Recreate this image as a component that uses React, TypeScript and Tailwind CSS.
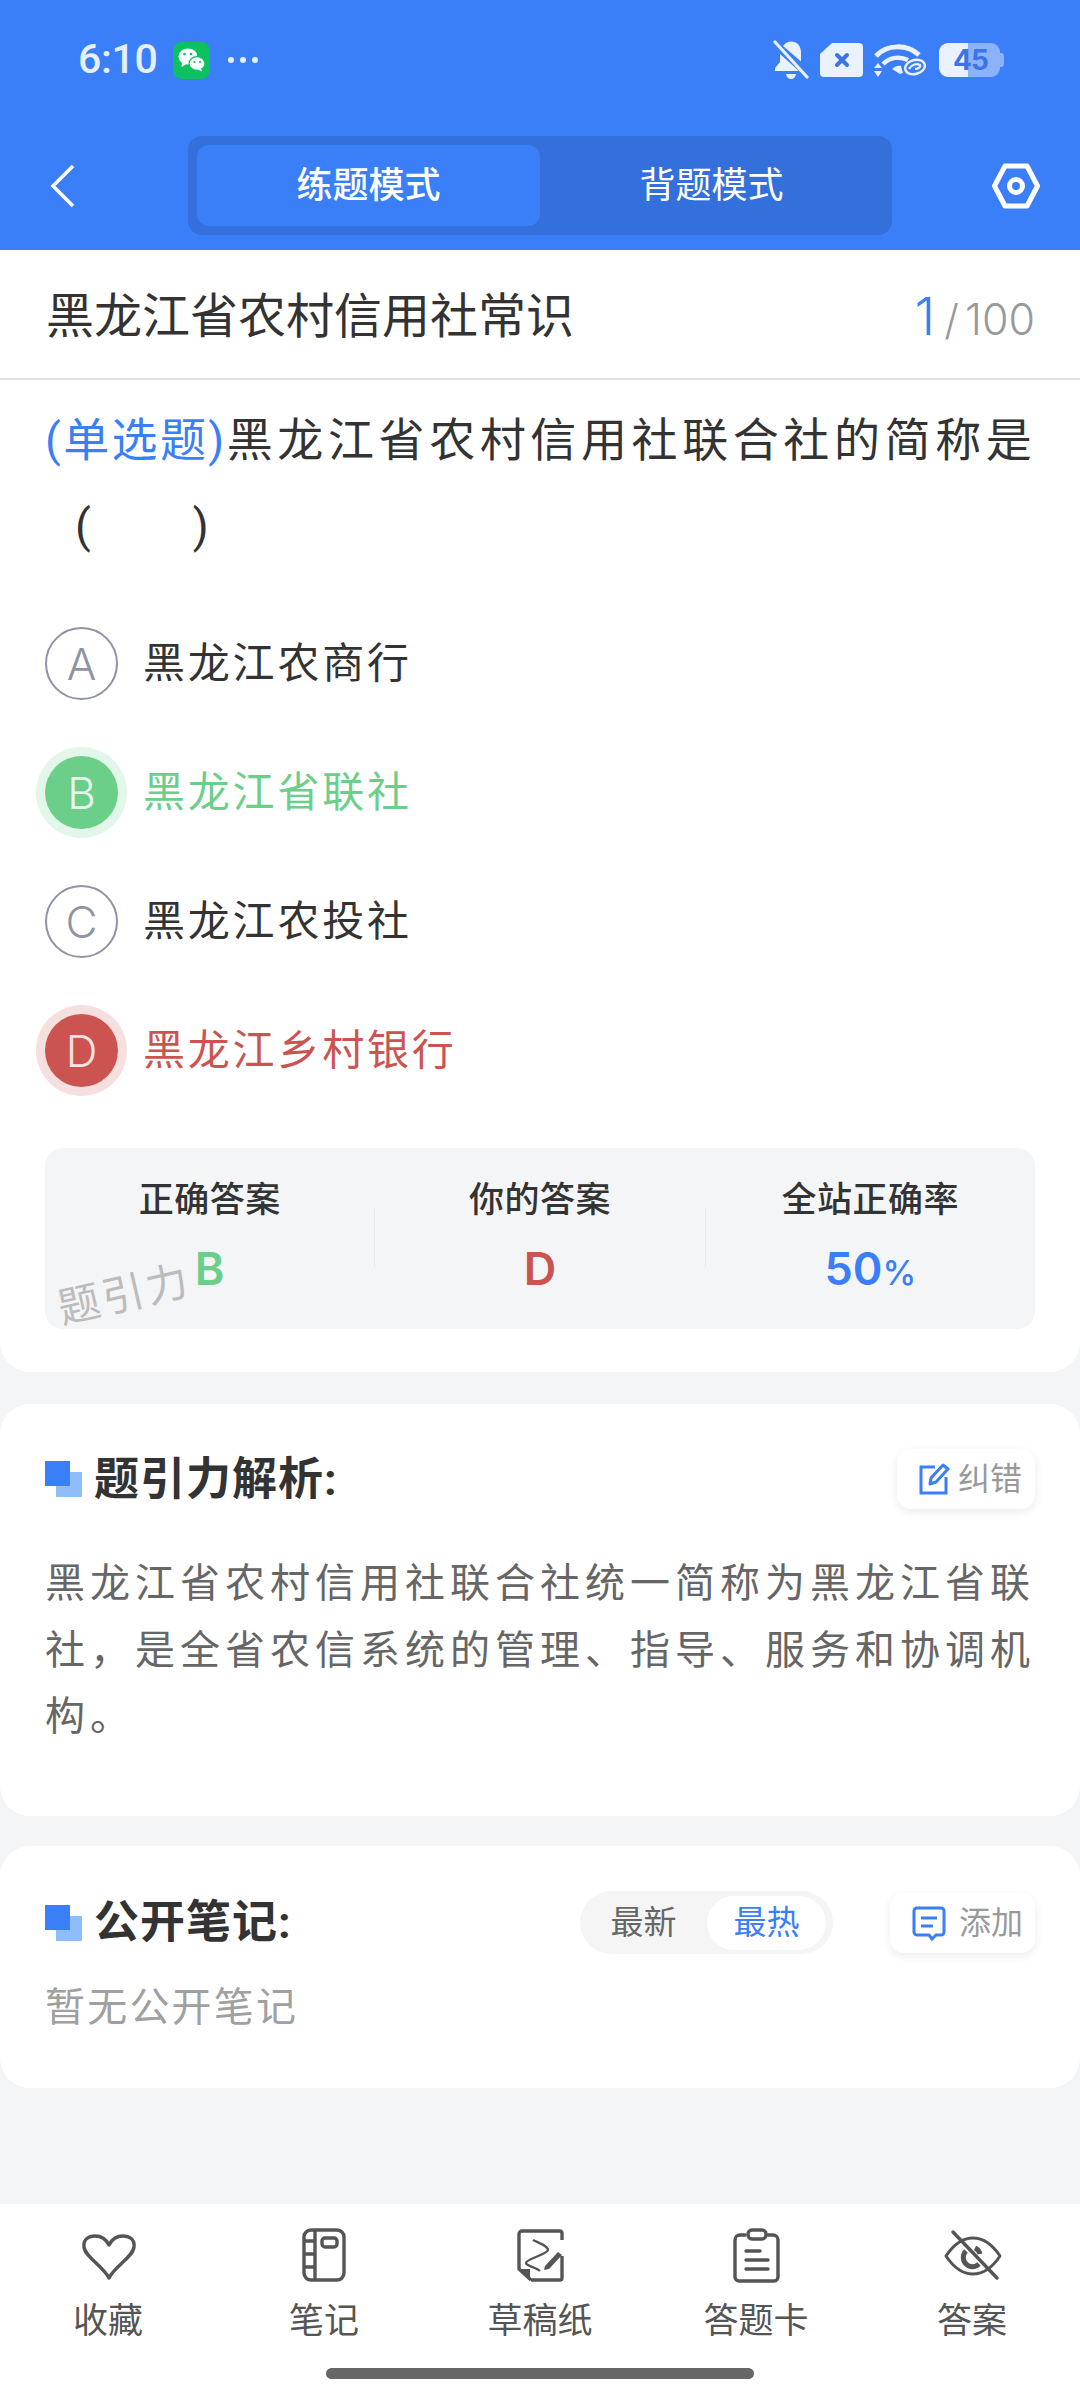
import { ReactNode } from "react"

/* ------------------------------ status bar ------------------------------ */

function WeChatIcon() {
    return (
        <svg width="37" height="37" viewBox="0 0 37 37">
            <rect width="37" height="37" rx="9" fill="#0ac25f" />
            <ellipse cx="15" cy="14.5" rx="9.5" ry="8" fill="#fff" />
            <path d="M9 20l-.5 5 5-3z" fill="#fff" />
            <ellipse cx="24" cy="21.5" rx="8" ry="6.8" fill="#fff" stroke="#0ac25f" strokeWidth="1.2" />
            <path d="M28 26.5l1 3-4-2z" fill="#fff" />
            <circle cx="11.5" cy="12" r="1.3" fill="#0ac25f" />
            <circle cx="18" cy="12" r="1.3" fill="#0ac25f" />
            <circle cx="21.5" cy="20" r="1.1" fill="#0ac25f" />
            <circle cx="27" cy="20" r="1.1" fill="#0ac25f" />
        </svg>
    )
}

function BellOff() {
    return (
        <svg width="36" height="40" viewBox="0 0 36 40" fill="#eaf1ff">
            <path d="M10 6c2-3 5-4.500 8-4.500 6 0 10 4.500 10 11v9l-18-15.500z" />
            <path d="M7 14v8l-5 6v3h24z" />
            <path d="M13 34h10c-.5 3-2.500 5-5 5s-4.500-2-5-5z" />
            <path d="M2 2l32 35" stroke="#eaf1ff" strokeWidth="3.2" strokeLinecap="round" />
        </svg>
    )
}

function SimBox() {
    return (
        <svg width="43" height="34" viewBox="0 0 43 34">
            <path d="M12 0h27a4 4 0 0 1 4 4v26a4 4 0 0 1-4 4H4a4 4 0 0 1-4-4V11z" fill="#eaf1ff" />
            <path d="M17 12l10 10M27 12L17 22" stroke="#3a74e6" strokeWidth="4" strokeLinecap="round" />
        </svg>
    )
}

function WifiIcon() {
    return (
        <svg width="52" height="34" viewBox="0 0 52 34" fill="none">
            <path d="M2 13C13 1 33 1 45 12" stroke="#eaf1ff" strokeWidth="5" />
            <path d="M9 21c7-7 17-8 25-4" stroke="#eaf1ff" strokeWidth="4.500" />
            <path d="M18 26c3-3 6-4 9-3l2 7-3 1z" fill="#eaf1ff" />
            <path d="M4 20l4 5H0zM4 34l4-6H0z" fill="#eaf1ff" />
            <ellipse cx="41" cy="24" rx="10" ry="7" stroke="#eaf1ff" strokeWidth="2.400" transform="rotate(-15 41 24)" />
            <path d="M35 26c2-4 7-6 11-4 1 2-2 4-5 4" stroke="#eaf1ff" strokeWidth="2.200" />
        </svg>
    )
}

function Battery() {
    return (
        <div className="relative flex h-[34px] w-[65px]">
            <div className="h-full w-[29px] rounded-l-[9px] bg-[#eaf1ff]" />
            <div className="h-full w-[32px] rounded-r-[9px] bg-[#8cb2fb]" />
            <div className="my-auto h-[14px] w-[4px] rounded-r-[3px] bg-[#8cb2fb]" />
            <span className="absolute left-[14px] top-0 font-['Inter'] text-[28px] font-bold leading-[34px] tracking-[-1px] text-[#3a74e6]">45</span>
        </div>
    )
}

function StatusBar() {
    return (
        <div className="flex h-[120px] items-center pl-[78px] pr-[76px]">
            <span className="w-[78px] whitespace-nowrap text-[41px] font-medium tracking-[-0.3px] text-[#e6eeff]">6:10</span>
            <div className="ml-[17px]">
                <WeChatIcon />
            </div>
            <div className="ml-[18px] flex gap-[6px]">
                <div className="h-[6px] w-[6px] rounded-full bg-[#e6eeff]" />
                <div className="h-[6px] w-[6px] rounded-full bg-[#e6eeff]" />
                <div className="h-[6px] w-[6px] rounded-full bg-[#e6eeff]" />
            </div>
            <div className="ml-auto flex items-center">
                <BellOff />
                <div className="ml-[11px]"><SimBox /></div>
                <div className="ml-[11px]"><WifiIcon /></div>
                <div className="ml-[13px]"><Battery /></div>
            </div>
        </div>
    )
}

/* --------------------------------- header -------------------------------- */

function Header() {
    return (
        <div className="h-[250px] bg-[#3b7ff8]">
            <StatusBar />
            <div className="mt-[16px] flex h-[99px] items-center">
                <svg className="ml-[48px]" width="30" height="46" viewBox="0 0 30 46" fill="none">
                    <path d="M25 3L5 23l20 20" stroke="#fff" strokeWidth="3.500" />
                </svg>
                <div className="ml-[110px] flex h-full w-[704px] rounded-[14px] bg-[#3370dc] p-[9px]">
                    <div className="flex flex-1 items-center justify-center rounded-[12px] bg-[#3b7ff8] text-[36px] font-medium text-white">练题模式</div>
                    <div className="flex flex-1 items-center justify-center text-[36px] text-white">背题模式</div>
                </div>
                <svg className="ml-[96px]" width="56" height="48" viewBox="0 0 56 48" fill="none">
                    <path d="M17 4h22l10.500 20L39 44H17L6.500 24z" stroke="#fff" strokeWidth="5" strokeLinejoin="round" />
                    <circle cx="28" cy="24" r="6.500" stroke="#fff" strokeWidth="5" />
                </svg>
            </div>
        </div>
    )
}

/* --------------------------------- options ------------------------------- */

interface Option {
    letter: string
    label: string
    state: "idle" | "right" | "wrong"
}

const options: Option[] = [
    { letter: "A", label: "黑龙江农商行", state: "idle" },
    { letter: "B", label: "黑龙江省联社", state: "right" },
    { letter: "C", label: "黑龙江农投社", state: "idle" },
    { letter: "D", label: "黑龙江乡村银行", state: "wrong" },
]

function OptionRow({ option }: { option: Option }) {
    const circle =
        option.state === "right"
            ? "bg-[#6bcf8a] text-[#e8f8ee] shadow-[0_0_0_9px_#e2f6e9]"
            : option.state === "wrong"
                ? "bg-[#cc5450] text-[#f8e4e3] shadow-[0_0_0_9px_#f6e0df]"
                : "border-2 border-[#8f93a3] text-[#8f93a3]"
    const text = option.state === "right" ? "text-[#6bcf8a]" : option.state === "wrong" ? "text-[#cc5450]" : "text-[#333333]"
    return (
        <div className="flex h-[129px] items-center">
            <div className={`flex h-[73px] w-[73px] items-center justify-center rounded-full font-['Inter'] text-[44px] font-light ${circle}`}>
                {option.letter}
            </div>
            <span className={`ml-[25px] text-[42px] leading-none tracking-[2.800px] ${text}`}>{option.label}</span>
        </div>
    )
}

function StatColumn({ label, children }: { label: string; children: ReactNode }) {
    return (
        <div className="flex flex-1 flex-col items-center pt-[31px]">
            <span className="text-[35px] font-medium leading-[44px] tracking-[0.500px] text-[#333333]">{label}</span>
            <div className="mt-[20px] font-['Inter'] text-[45px] font-semibold leading-[52px]">{children}</div>
        </div>
    )
}

function QuestionCard() {
    return (
        <div className="rounded-b-[30px] bg-white">
            <div className="flex h-[130px] items-center justify-between border-b-2 border-[#e2e2e2] pl-[46px] pr-[45px] pt-[5px]">
                <span className="text-[48px] leading-none text-[#333333]">黑龙江省农村信用社常识</span>
                <div className="flex items-baseline font-['Inter'] text-[#999999]">
                    <span className="text-[52px] font-light text-[#3b7ff8]">1</span>
                    <span className="ml-[9px] font-light text-[42px]">/</span>
                    <span className="ml-[6px] text-[43px] font-light">100</span>
                </div>
            </div>
            <div className="px-[45px] pt-[17px]">
                <div className="whitespace-nowrap text-[46px] leading-[87px] tracking-[4.600px] text-[#333333]">
                    <span className="tracking-[2.400px] text-[#3b7ff8]">(单选题)</span>黑龙江省农村信用社联合社的简称是
                </div>
                <div className="flex h-[84px] items-center pl-[30px] text-[46px] text-[#333333]">
                    <span>(</span>
                    <span className="w-[102px]" />
                    <span>)</span>
                </div>
                <div className="mt-[31px]">
                    {options.map((option) => (
                        <OptionRow key={option.letter} option={option} />
                    ))}
                </div>
                <div className="relative mt-[33px] flex h-[181px] rounded-[18px] bg-[#f4f5f7]">
                    <StatColumn label="正确答案">
                        <span className="text-[#6bcf8a]">B</span>
                    </StatColumn>
                    <div className="mt-[60px] h-[59px] w-px bg-[#e6e7ea]" />
                    <StatColumn label="你的答案">
                        <span className="text-[#cc5450]">D</span>
                    </StatColumn>
                    <div className="mt-[60px] h-[59px] w-px bg-[#e6e7ea]" />
                    <StatColumn label="全站正确率">
                        <span className="text-[#3b7ff8]">50<span className="text-[34px] font-medium">%</span></span>
                    </StatColumn>
                    <span className="absolute left-[12px] top-[126px] -rotate-[13deg] text-[42px] leading-none tracking-[3px] text-[#bcbcbc]">题引力</span>
                </div>
            </div>
            <div className="h-[43px]" />
        </div>
    )
}

/* --------------------------------- cards --------------------------------- */

function SectionTitle({ children }: { children: ReactNode }) {
    return (
        <div className="flex items-center">
            <div className="relative h-[36px] w-[37px]">
                <div className="absolute left-[11px] top-[11px] h-[25px] w-[26px] bg-[#8fbdfb]" />
                <div className="absolute left-0 top-0 h-[25px] w-[25px] bg-[#3b7ff8]" />
            </div>
            <span className="ml-[12px] text-[45px] font-bold leading-none tracking-[1px] text-[#333333]">{children}</span>
        </div>
    )
}

function ActionButton({ icon, label, wide }: { icon: ReactNode; label: string; wide?: boolean }) {
    return (
        <div className={`flex h-[60px] items-center rounded-[14px] bg-white pl-[21px] shadow-[0_3px_10px_rgba(0,0,0,0.08)] ${wide ? "w-[145px] gap-[12px]" : "w-[138px] gap-[8px]"}`}>
            {icon}
            <span className="text-[32px] text-[#999999]">{label}</span>
        </div>
    )
}

function AnalysisCard() {
    return (
        <div className="mt-[32px] h-[412px] rounded-[30px] bg-white pl-[45px] pr-[35px] pt-[45px]">
            <div className="mr-[10px] flex items-center justify-between">
                <SectionTitle>题引力解析:</SectionTitle>
                <ActionButton
                    label="纠错"
                    icon={
                        <svg width="32" height="32" viewBox="0 0 32 32" fill="none">
                            <path d="M17 4H3v26h25V14" stroke="#3b7ff8" strokeWidth="3" />
                            <path d="M12 21l1-6L25 2l5 4-12 13z" stroke="#3b7ff8" strokeWidth="3" strokeLinejoin="round" />
                        </svg>
                    }
                />
            </div>
            <p className="mt-[42px] text-[40px] leading-[66.500px] tracking-[5px] text-[#666666]">
                黑龙江省农村信用社联合社统一简称为黑龙江省联社，是全省农信系统的管理、指导、服务和协调机构。
            </p>
        </div>
    )
}

function NotesCard() {
    return (
        <div className="mt-[30px] h-[242px] rounded-[30px] bg-white px-[45px] pt-[45px]">
            <div className="flex items-center">
                <SectionTitle>公开笔记:</SectionTitle>
                <div className="ml-auto flex h-[63px] w-[253px] items-center rounded-full bg-[#f5f5f5] pr-[7px]">
                    <span className="flex-1 text-center text-[33px] text-[#666666]">最新</span>
                    <span className="flex h-[54px] w-[119px] items-center justify-center rounded-full bg-white text-[33px] text-[#3b7ff8]">最热</span>
                </div>
                <div className="ml-[57px]">
                    <ActionButton
                        wide
                        label="添加"
                        icon={
                            <svg width="36" height="36" viewBox="0 0 36 36" fill="none">
                                <path d="M6 3h24a3 3 0 0 1 3 3v21a3 3 0 0 1-3 3h-5l-4 4-3-4H6a3 3 0 0 1-3-3V6a3 3 0 0 1 3-3z" stroke="#3b7ff8" strokeWidth="3" />
                                <path d="M10 13h16M10 21h12" stroke="#3b7ff8" strokeWidth="3" />
                            </svg>
                        }
                    />
                </div>
            </div>
            <p className="mt-[30px] text-[40px] leading-[48px] tracking-[2.200px] text-[#a0a0a0]">暂无公开笔记</p>
        </div>
    )
}

/* ------------------------------- bottom bar ------------------------------ */

const stroke = { stroke: "#555555", strokeWidth: 3.4, fill: "none" }

const tabs: { label: string; icon: ReactNode }[] = [
    {
        label: "收藏",
        icon: <path {...stroke} d="M31 52C25 40 7 31 6 21C5 13 11 10 17 10C23 10 28 13 31 19C34 13 39 10 45 10C51 10 57 13 56 21C55 31 37 40 31 52Z" strokeLinejoin="round" />,
    },
    {
        label: "笔记",
        icon: (
            <g {...stroke}>
                <rect x="10" y="4" width="40" height="50" rx="7" />
                <path d="M21 4v50M10 15h11M10 28h11M10 41h11" />
                <rect x="28" y="12" width="15" height="9" rx="3" />
            </g>
        ),
    },
    {
        label: "草稿纸",
        icon: (
            <g {...stroke}>
                <path d="M21 54H50a2 2 0 0 0 2-2V30M52 14V7a2 2 0 0 0-2-2H12a3 3 0 0 0-3 3v35L21 54" strokeLinejoin="round" />
                <path d="M23 14C29 17 38 20 38 24C38 28 16 33 16 37C16 40 26 41 30 45" strokeWidth="2.400" />
                <path d="M35 40l13-14 4 3-13 14-5 1z" fill="#555555" stroke="none" />
                <path d="M9 43h11v11z" fill="#555555" stroke="none" />
            </g>
        ),
    },
    {
        label: "答题卡",
        icon: (
            <g {...stroke}>
                <path d="M19 9h-5a5 5 0 0 0-5 5v37a4 4 0 0 0 4 4h35a4 4 0 0 0 4-4V14a5 5 0 0 0-5-5h-5" strokeLinecap="round" />
                <rect x="22" y="4" width="18" height="9" rx="4" />
                <path d="M20 25h14M20 34h22M20 43h22" strokeLinecap="round" />
            </g>
        ),
    },
    {
        label: "答案",
        icon: (
            <g {...stroke}>
                <path d="M4 30c6-9 15-18 27-18s21 9 27 18c-6 9-15 18-27 18S10 39 4 30z" strokeLinejoin="round" strokeWidth="3" />
                <path d="M24 25a9 9 0 0 0 13 13" strokeWidth="5" />
                <path d="M33 22a9 9 0 0 1 5 6" strokeWidth="5" />
                <path d="M11 6l44 46" strokeLinecap="round" />
            </g>
        ),
    },
]

function BottomBar() {
    return (
        <div className="mt-auto h-[196px] bg-white">
            <div className="flex pt-[22px]">
                {tabs.map((tab) => (
                    <div key={tab.label} className="flex w-[216px] flex-col items-center">
                        <svg width="60" height="60" viewBox="0 0 60 60">
                            {tab.icon}
                        </svg>
                        <span className="mt-[14px] text-[35px] leading-[44px] text-[#555555]">{tab.label}</span>
                    </div>
                ))}
            </div>
            <div className="mx-auto mt-[24px] h-[11px] w-[428px] rounded-full bg-[#666666]" />
        </div>
    )
}

export default function App() {
    return (
        <div className="flex h-[2400px] w-[1080px] flex-col overflow-hidden bg-[#f4f5f7] font-['Roboto','Noto_Sans_CJK_SC',sans-serif]">
            <Header />
            <QuestionCard />
            <AnalysisCard />
            <NotesCard />
            <BottomBar />
        </div>
    )
}
